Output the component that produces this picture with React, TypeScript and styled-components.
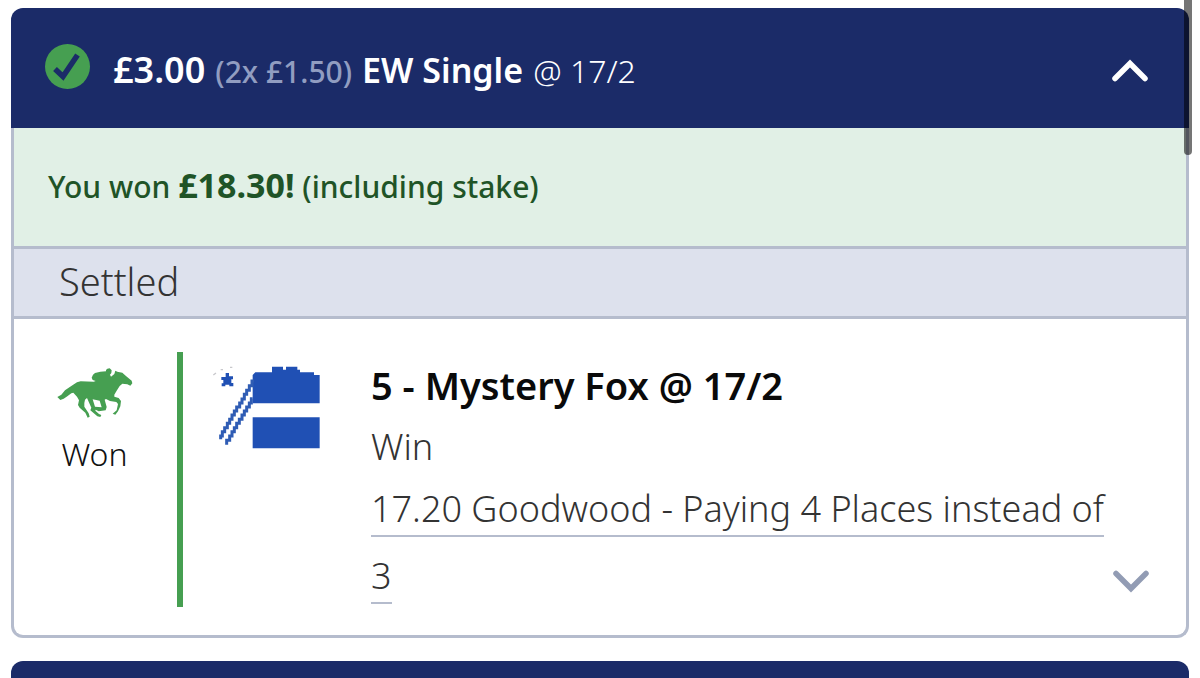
import React from "react";
import styled, { createGlobalStyle } from "styled-components";

const navy = "#1b2b68";
const line = "#b5bccd";
const green = "#469f51";

const GlobalStyle = createGlobalStyle`
  *, *::before, *::after { box-sizing: border-box; }
  body {
    margin: 0;
    background: #ffffff;
    overflow: hidden;
    font-family: "Noto Sans", "Open Sans", sans-serif;
    font-weight: 300;
    font-size: 36px;
    line-height: 48px;
    color: #333333;
  }
`;

const Page = styled.main`
  position: relative;
  display: flex;
  flex-direction: column;
  gap: 23px;
  padding: 8px 11px 0;
`;

const ScrollThumb = styled.div`
  position: absolute;
  top: 0;
  right: 8px;
  width: 8px;
  height: 155px;
  border-radius: 0 0 4px 4px;
  background: rgba(0, 0, 0, 0.54);
`;

const BetCard = styled.section`
  display: flex;
  flex-direction: column;
`;

const BetHeader = styled.button`
  display: flex;
  align-items: center;
  width: 100%;
  min-height: 120px;
  padding: 0 40px 0 34px;
  border: 0;
  border-radius: 12px 12px 0 0;
  background: ${navy};
  color: #ffffff;
  font: inherit;
  text-align: left;
  cursor: pointer;
`;

const BetSummary = styled.span`
  display: flex;
  flex: 1;
  align-items: baseline;
  gap: 10px;
  margin: 6px 0 0 22px;
`;

const Stake = styled.span`
  font-weight: 600;
`;

const StakeLines = styled.span`
  font-size: 30px;
  font-weight: 500;
  color: #919dc1;
`;

const BetType = styled.span`
  font-size: 34px;
  font-weight: 600;
`;

const Odds = styled.span`
  font-size: 32px;
`;

const BetBody = styled.div`
  border: solid ${line};
  border-width: 0 3px 3px;
  border-radius: 0 0 12px 12px;
  overflow: hidden;
`;

const WinBanner = styled.p`
  margin: 0;
  padding: 35px 34px;
  background: #e1f0e6;
  color: #1f5427;
  font-size: 30px;
  font-weight: 500;
`;

const Amount = styled.strong`
  font-size: 34px;
  font-weight: 700;
  line-height: 1;
`;

const StatusBar = styled.h2`
  margin: 0;
  padding: 8px 45px 11px;
  border: solid ${line};
  border-width: 3px 0;
  background: #dde1ed;
  font-size: 38px;
  font-weight: 300;
`;

const Selection = styled.div`
  display: flex;
  padding: 33px 36px 28px 42px;
`;

const Outcome = styled.div`
  display: flex;
  flex-direction: column;
  align-items: center;
  width: 127px;
  padding: 16px 44px 0 0;
  border-right: 6px solid ${green};
  color: #111111;
  font-size: 32px;
`;

const OutcomeLabel = styled.span`
  margin-top: 12px;
`;

const SilkSlot = styled.div`
  flex: none;
  width: 188px;
  padding: 11px 0 0 29px;
`;

const Details = styled.div`
  flex: 1;
  min-width: 0;
`;

const RunnerName = styled.h3`
  margin: 9px 0 14px;
  color: #0a0a0a;
  font-size: 38px;
  font-weight: 600;
  line-height: 48px;
`;

const Market = styled.p`
  margin: 0 0 4px;
`;

const Race = styled.p`
  margin: 0 0 -2px;
  line-height: 67px;
`;

const RaceLink = styled.a`
  padding-bottom: 2px;
  border-bottom: 2px solid ${line};
  color: inherit;
  text-decoration: none;
`;

const ExpandButton = styled.button`
  display: flex;
  align-self: flex-end;
  margin-bottom: 13px;
  padding: 0;
  border: 0;
  background: none;
  cursor: pointer;
`;

const NextHeader = styled(BetHeader)`
  margin-bottom: -103px;
`;

function TickBadge() {
  return (
    <svg width="46" height="48" viewBox="0 0 46 48" aria-hidden="true">
      <circle cx="22.500" cy="22.500" r="22.500" fill={green} />
      <path d="M10 25 18 32.500 32.500 11" fill="none" stroke={navy} strokeWidth="5.500" />
    </svg>
  );
}

function Chevron({ color, down = false }: { color: string; down?: boolean }) {
  return (
    <svg
      width="38"
      height={down ? 24 : 28}
      viewBox={down ? "0 0 38 24" : "0 0 38 28"}
      aria-hidden="true"
    >
      <path
        d={down ? "M4 3.500 19 18.500 34 3.500" : "M4 24.500 19 9.500 34 24.500"}
        fill="none"
        stroke={color}
        strokeWidth="5.500"
        strokeLinecap="round"
      />
    </svg>
  );
}

function RacehorseIcon() {
  return (
    <svg width="76" height="50" viewBox="52 68 228 150" aria-hidden="true">
      <path
        fill={green}
        d="M53 155 65 148 76 135 96 121 112 111 123 108 162 109 168 107 159 104 156 97 160 88 166 83 182 79 199 78 199 74 203 70 210 69 216 75 215 83 211 88 214 94 211 101 214 94 224 86 227 76 233 79 248 82 258 91 276 106 278 114 272 121 263 117 248 115 240 122 231 136 224 148 224 154 237 158 244 167 242 183 235 198 227 208 219 205 231 195 235 176 230 170 211 167 199 161 195 163 201 185 198 195 177 198 168 193 167 196 178 206 185 209 182 215 173 213 152 195 155 187 145 165 142 158 136 163 134 173 134 184 147 204 150 214 144 217 137 202 120 187 115 179 118 165 112 154 101 142 95 144 83 153 72 160 62 164ZM159 162 166 184 186 186 180 166Z"
        fillRule="evenodd"
      />
    </svg>
  );
}

function RacingSilk() {
  return (
    <svg width="110" height="86" viewBox="36 38 330 258" role="img" aria-label="Racing silks">
      <g fill="#2050b4">
        <path d="M158 74 166 66H216V49H249V58H258V49H292V58H300V66H342V74H359V159H158Z" />
        <path d="M158 201H359V294H158Z" />
        <path d="M77 68H87V78H99V87H94V98H100V108H88V103H76V108H65V99H70V89H64V80H77Z" />
      </g>
      <g fill="none" stroke="#2f5cb4" strokeWidth="9">
        <path d="M162 92H156V106H148V120H140V132H133V146H126V158H119V170H110V182H103V194H96V207H89V219H82V232H74V244H67V257H62V267" />
        <path d="M158 145H154V158H148V170H140V182H133V194H126V207H118V219H110V232H103V244H96V257H89V270H80V283" />
      </g>
      <path d="M40 74 48 68M62 58H69M90 51H97" stroke="#c8c8cc" strokeWidth="4" />
    </svg>
  );
}

export default function App() {
  return (
    <>
      <GlobalStyle />
      <Page>
        <BetCard>
          <BetHeader type="button" aria-expanded="true">
            <TickBadge />
            <BetSummary>
              <Stake>£3.00</Stake>
              <StakeLines>(2x £1.50)</StakeLines>
              <BetType>EW Single</BetType>
              <Odds>@ 17/2</Odds>
            </BetSummary>
            <Chevron color="#ffffff" />
          </BetHeader>
          <BetBody>
            <WinBanner>
              You won <Amount>£18.30!</Amount> (including stake)
            </WinBanner>
            <StatusBar>Settled</StatusBar>
            <Selection>
              <Outcome>
                <RacehorseIcon />
                <OutcomeLabel>Won</OutcomeLabel>
              </Outcome>
              <SilkSlot>
                <RacingSilk />
              </SilkSlot>
              <Details>
                <RunnerName>5 - Mystery Fox @ 17/2</RunnerName>
                <Market>Win</Market>
                <Race>
                  <RaceLink href="#race">17.20 Goodwood - Paying 4 Places instead of 3</RaceLink>
                </Race>
              </Details>
              <ExpandButton type="button" aria-label="Show race details">
                <Chevron color="#929cb4" down />
              </ExpandButton>
            </Selection>
          </BetBody>
        </BetCard>
        <NextHeader type="button" aria-label="Next bet" />
        <ScrollThumb />
      </Page>
    </>
  );
}
